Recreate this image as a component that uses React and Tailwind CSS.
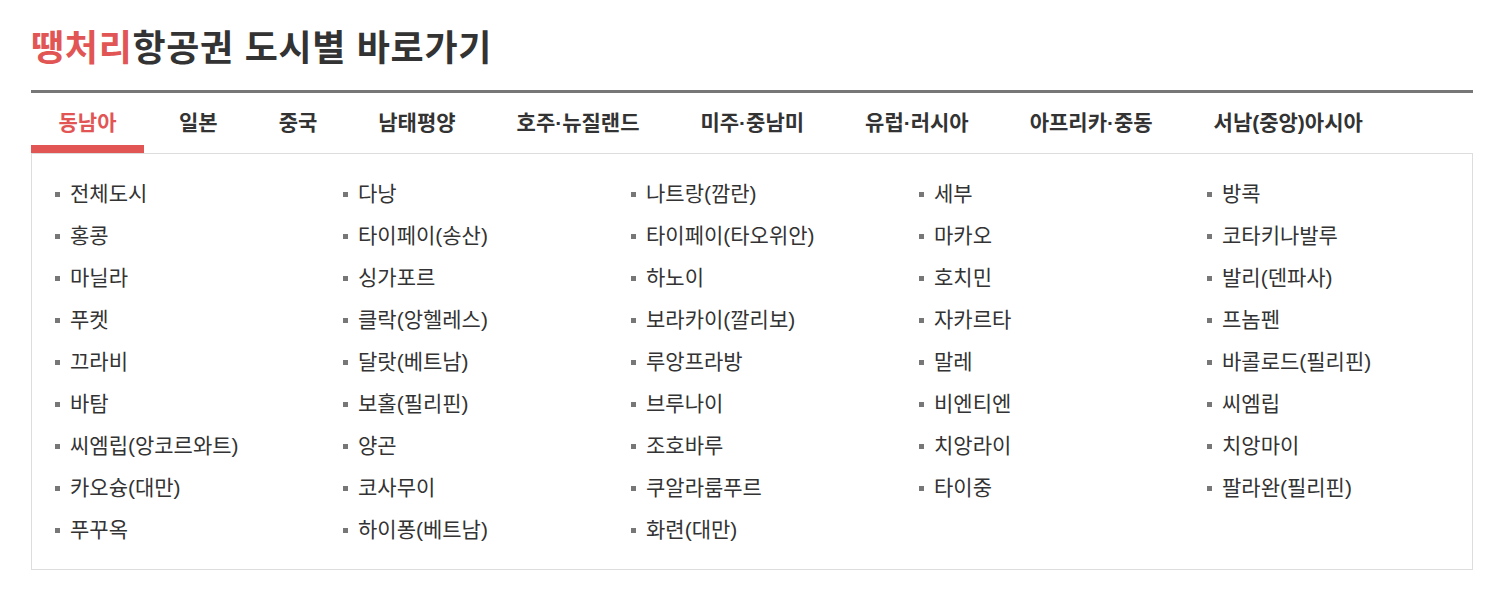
import React from 'react';

const tabs = ['동남아', '일본', '중국', '남태평양', '호주·뉴질랜드', '미주·중남미', '유럽·러시아', '아프리카·중동', '서남(중앙)아시아'];

const cities = [
  '전체도시', '다낭', '나트랑(깜란)', '세부', '방콕',
  '홍콩', '타이페이(송산)', '타이페이(타오위안)', '마카오', '코타키나발루',
  '마닐라', '싱가포르', '하노이', '호치민', '발리(덴파사)',
  '푸켓', '클락(앙헬레스)', '보라카이(깔리보)', '자카르타', '프놈펜',
  '끄라비', '달랏(베트남)', '루앙프라방', '말레', '바콜로드(필리핀)',
  '바탐', '보홀(필리핀)', '브루나이', '비엔티엔', '씨엠립',
  '씨엠립(앙코르와트)', '양곤', '조호바루', '치앙라이', '치앙마이',
  '카오슝(대만)', '코사무이', '쿠알라룸푸르', '타이중', '팔라완(필리핀)',
  '푸꾸옥', '하이퐁(베트남)', '화련(대만)',
];

const CityShortcuts = () => {
  return (
    <div className="bg-white pl-[31px] pr-[39px] pt-[26px] font-['Liberation_Sans','Noto_Sans_CJK_KR',sans-serif] text-[#333]">
      <h2 className="text-[36px] font-bold leading-[46px] tracking-[0.7px] mb-[18px]">
        <span className="text-[#e25555]">땡처리</span>항공권 도시별 바로가기
      </h2>
      <div className="border-t-[3px] border-[#777]">
        <ul className="flex h-[60px] items-end">
          {tabs.map((tab, i) => (
            <li
              key={tab}
              className={
                i === 0
                  ? 'w-[113px] text-center text-[21px] font-bold text-[#e25555] border-b-[8px] border-[#e25555] pb-[7px] leading-[30px]'
                  : i === 1
                  ? 'pl-[35px] pr-[30.5px] text-[21px] font-bold text-[#333] pb-[15px] leading-[30px]'
                  : 'px-[30.5px] text-[21px] font-bold text-[#333] pb-[15px] leading-[30px]'
              }
            >
              {tab}
            </li>
          ))}
        </ul>
        <div className="border border-[#ddd] pt-[19px] pb-[18px]">
          <ul className="grid grid-cols-5">
            {cities.map((city) => (
              <li key={city} className="flex items-center h-[42px] pl-[23px] text-[21px]">
                <span className="w-[5px] h-[5px] bg-[#777] mr-[10px] shrink-0" />
                {city}
              </li>
            ))}
          </ul>
        </div>
      </div>
    </div>
  );
};

export default function App() {
  return <CityShortcuts />;
}
